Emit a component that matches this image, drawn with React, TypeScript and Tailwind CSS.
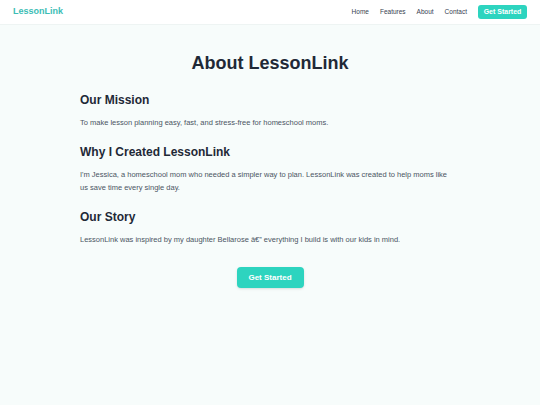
import React from "react";

export default function App() {
  return (
    <div className="min-h-[405px] bg-[#f7fcfb] text-[#1f2937]" style={{ fontFamily: '"Liberation Sans", Arial, sans-serif' }}>
      <header className="h-[25px] bg-white border-b border-[#eef4f3] flex items-center justify-between pl-[13px] pr-[13px]">
        <div className="text-[9px] font-bold text-[#3cbdb5]">LessonLink</div>
        <nav className="flex items-center gap-[11px] text-[6.5px] text-[#374151]">
          <span>Home</span>
          <span>Features</span>
          <span>About</span>
          <span>Contact</span>
          <span className="bg-[#2dd4bf] text-white font-bold text-[7px] rounded-[3px] w-[49px] h-[14px] flex items-center justify-center">Get Started</span>
        </nav>
      </header>
      <main className="w-[380px] mx-auto pt-[27px]">
        <h1 className="text-[18px] font-bold text-center leading-[22px]">About LessonLink</h1>
        <h2 className="mt-[18px] text-[12px] font-bold leading-[16px]">Our Mission</h2>
        <p className="mt-[9px] pr-[12px] text-[7.5px] leading-[12px] text-[#4b5563]">To make lesson planning easy, fast, and stress-free for homeschool moms.</p>
        <h2 className="mt-[15px] text-[12px] font-bold leading-[16px]">Why I Created LessonLink</h2>
        <p className="mt-[8px] pr-[12px] text-[7.5px] leading-[13px] text-[#4b5563]">I'm Jessica, a homeschool mom who needed a simpler way to plan. LessonLink was created to help moms like us save time every single day.</p>
        <h2 className="mt-[15px] text-[12px] font-bold leading-[16px]">Our Story</h2>
        <p className="mt-[9px] pr-[12px] text-[7.5px] leading-[12px] text-[#4b5563]">LessonLink was inspired by my daughter Bellarose â€” everything I build is with our kids in mind.</p>
        <div className="flex justify-center mt-[21px]">
          <span className="bg-[#2dd4bf] text-white font-bold text-[8px] rounded-[4px] w-[67px] h-[21px] flex items-center justify-center shadow-sm">Get Started</span>
        </div>
      </main>
    </div>
  );
}
